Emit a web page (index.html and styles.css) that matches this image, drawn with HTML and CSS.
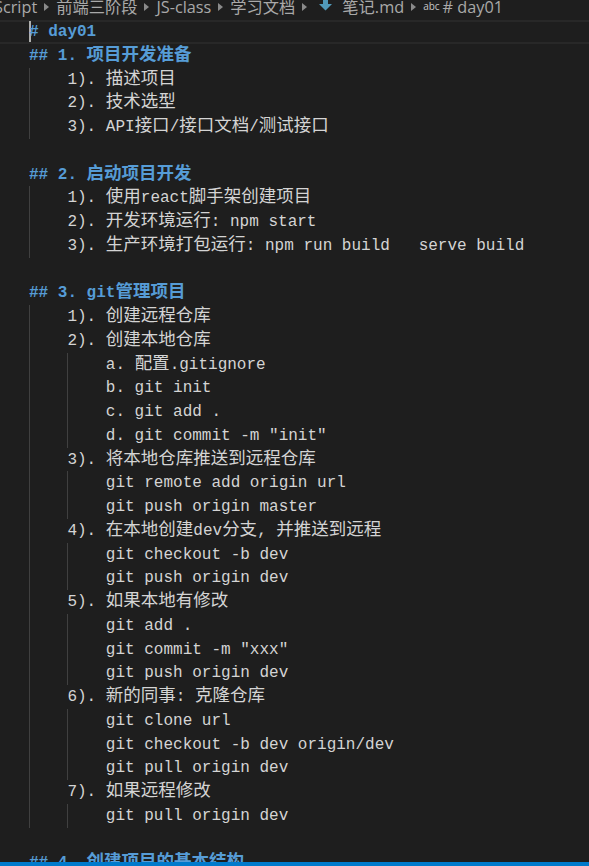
FILE: index.html
```html
<!DOCTYPE html>
<html lang="zh">
<head>
<meta charset="utf-8">
<title>笔记.md</title>
<link rel="stylesheet" href="styles.css">
</head>
<body>
<div class="window">
  <nav class="crumbs">
    <span class="crumb first">Script</span>
    <span class="chev"><svg width="5" height="8" viewBox="0 0 5 8"><path d="M0 0 L5 4 L0 8 Z" fill="#8a8a8a"/></svg></span>
    <span class="crumb">前端三阶段</span>
    <span class="chev"><svg width="5" height="8" viewBox="0 0 5 8"><path d="M0 0 L5 4 L0 8 Z" fill="#8a8a8a"/></svg></span>
    <span class="crumb">JS-class</span>
    <span class="chev"><svg width="5" height="8" viewBox="0 0 5 8"><path d="M0 0 L5 4 L0 8 Z" fill="#8a8a8a"/></svg></span>
    <span class="crumb">学习文档</span>
    <span class="chev"><svg width="5" height="8" viewBox="0 0 5 8"><path d="M0 0 L5 4 L0 8 Z" fill="#8a8a8a"/></svg></span>
    <span class="mdicon"><svg width="13" height="14" viewBox="0 0 13 14"><path d="M4 0 H9 V6 H13 L6.5 12.5 L0 6 H4 Z" fill="#519aba"/></svg></span>
    <span class="crumb">笔记.md</span>
    <span class="chev"><svg width="5" height="8" viewBox="0 0 5 8"><path d="M0 0 L5 4 L0 8 Z" fill="#8a8a8a"/></svg></span>
    <span class="abc">abc</span>
    <span class="crumb">#&nbsp;day01</span>
  </nav>

  <main class="editor">
    <div class="line h current"><span class="cursor"></span># day01</div>
    <div class="line h">## 1. <span class="cjk">项目开发准备</span></div>
    <div class="line"><span class="ind"></span>1). <span class="cjk">描述项目</span></div>
    <div class="line"><span class="ind"></span>2). <span class="cjk">技术选型</span></div>
    <div class="line"><span class="ind"></span>3). API<span class="cjk">接口</span>/<span class="cjk">接口文档</span>/<span class="cjk">测试接口</span></div>
    <div class="line"></div>
    <div class="line h">## 2. <span class="cjk">启动项目开发</span></div>
    <div class="line"><span class="ind"></span>1). <span class="cjk">使用</span>react<span class="cjk">脚手架创建项目</span></div>
    <div class="line"><span class="ind"></span>2). <span class="cjk">开发环境运行</span>: npm start</div>
    <div class="line"><span class="ind"></span>3). <span class="cjk">生产环境打包运行</span>: npm run build   serve build</div>
    <div class="line"></div>
    <div class="line h">## 3. git<span class="cjk">管理项目</span></div>
    <div class="line"><span class="ind"></span>1). <span class="cjk">创建远程仓库</span></div>
    <div class="line"><span class="ind"></span>2). <span class="cjk">创建本地仓库</span></div>
    <div class="line"><span class="ind"></span><span class="ind"></span>a. <span class="cjk">配置</span>.gitignore</div>
    <div class="line"><span class="ind"></span><span class="ind"></span>b. git init</div>
    <div class="line"><span class="ind"></span><span class="ind"></span>c. git add .</div>
    <div class="line"><span class="ind"></span><span class="ind"></span>d. git commit -m "init"</div>
    <div class="line"><span class="ind"></span>3). <span class="cjk">将本地仓库推送到远程仓库</span></div>
    <div class="line"><span class="ind"></span><span class="ind"></span>git remote add origin url</div>
    <div class="line"><span class="ind"></span><span class="ind"></span>git push origin master</div>
    <div class="line"><span class="ind"></span>4). <span class="cjk">在本地创建</span>dev<span class="cjk">分支</span>, <span class="cjk">并推送到远程</span></div>
    <div class="line"><span class="ind"></span><span class="ind"></span>git checkout -b dev</div>
    <div class="line"><span class="ind"></span><span class="ind"></span>git push origin dev</div>
    <div class="line"><span class="ind"></span>5). <span class="cjk">如果本地有修改</span></div>
    <div class="line"><span class="ind"></span><span class="ind"></span>git add .</div>
    <div class="line"><span class="ind"></span><span class="ind"></span>git commit -m "xxx"</div>
    <div class="line"><span class="ind"></span><span class="ind"></span>git push origin dev</div>
    <div class="line"><span class="ind"></span>6). <span class="cjk">新的同事</span>: <span class="cjk">克隆仓库</span></div>
    <div class="line"><span class="ind"></span><span class="ind"></span>git clone url</div>
    <div class="line"><span class="ind"></span><span class="ind"></span>git checkout -b dev origin/dev</div>
    <div class="line"><span class="ind"></span><span class="ind"></span>git pull origin dev</div>
    <div class="line"><span class="ind"></span>7). <span class="cjk">如果远程修改</span></div>
    <div class="line"><span class="ind"></span><span class="ind"></span>git pull origin dev</div>
    <div class="line"></div>
    <div class="line h">## 4. <span class="cjk">创建项目的基本结构</span></div>
  </main>

  <footer class="statusbar"></footer>
</div>
</body>
</html>
```

FILE: styles.css
```css
html, body {
  margin: 0;
  padding: 0;
  background: #1e1e1e;
}

.window {
  width: 589px;
  height: 866px;
  display: flex;
  flex-direction: column;
  overflow: hidden;
  background: #1e1e1e;
}

/* breadcrumbs */
.crumbs {
  flex: 0 0 20px;
  height: 20px;
  display: flex;
  align-items: flex-start;
  overflow: hidden;
  white-space: nowrap;
  font-family: "Open Sans", "Noto Sans CJK SC", sans-serif;
  font-size: 16.25px;
  line-height: 14px;
  color: #a9a9a9;
}

.crumb {
  display: block;
  height: 20px;
}

.crumb.first {
  margin-left: -6px;
}

.chev {
  display: flex;
  align-items: center;
  height: 14px;
  margin: 0 7px 0 7px;
}

.mdicon {
  display: block;
  margin: -2px 10px 0 5px;
  height: 14px;
}

.abc {
  display: block;
  font-size: 10px;
  line-height: 12px;
  margin: 0 3px 0 0;
  color: #c5c5c5;
}

/* editor */
.editor {
  flex: 1 1 auto;
  overflow: hidden;
  padding-left: 29px;
  font-family: "Liberation Mono", "Noto Sans CJK SC", monospace;
  font-size: 16px;
  line-height: 23.75px;
  color: #d4d4d4;
}

.line {
  height: 23.75px;
  box-sizing: border-box;
  padding-top: 1px;
  white-space: pre;
}

.line.h {
  color: #569cd6;
  font-weight: bold;
}

.line.current {
  margin-left: -29px;
  padding-left: 29px;
  padding-top: 0;
  border-top: 2px solid #282828;
  border-bottom: 2px solid #282828;
  line-height: 21.75px;
}

.cursor {
  display: inline-block;
  width: 2px;
  height: 21px;
  margin-right: -2px;
  margin-top: -1px;
  vertical-align: top;
  background: #aeafad;
}

.cjk {
  font-family: "Noto Sans CJK SC", sans-serif;
  font-size: 17.5px;
  line-height: 16px;
}

.ind {
  display: inline-block;
  width: 4ch;
  height: 23.75px;
  margin-top: -1px;
  vertical-align: top;
  box-sizing: border-box;
  border-left: 1px solid #404040;
}

.statusbar {
  flex: 0 0 4px;
  background: #007acc;
}
```
